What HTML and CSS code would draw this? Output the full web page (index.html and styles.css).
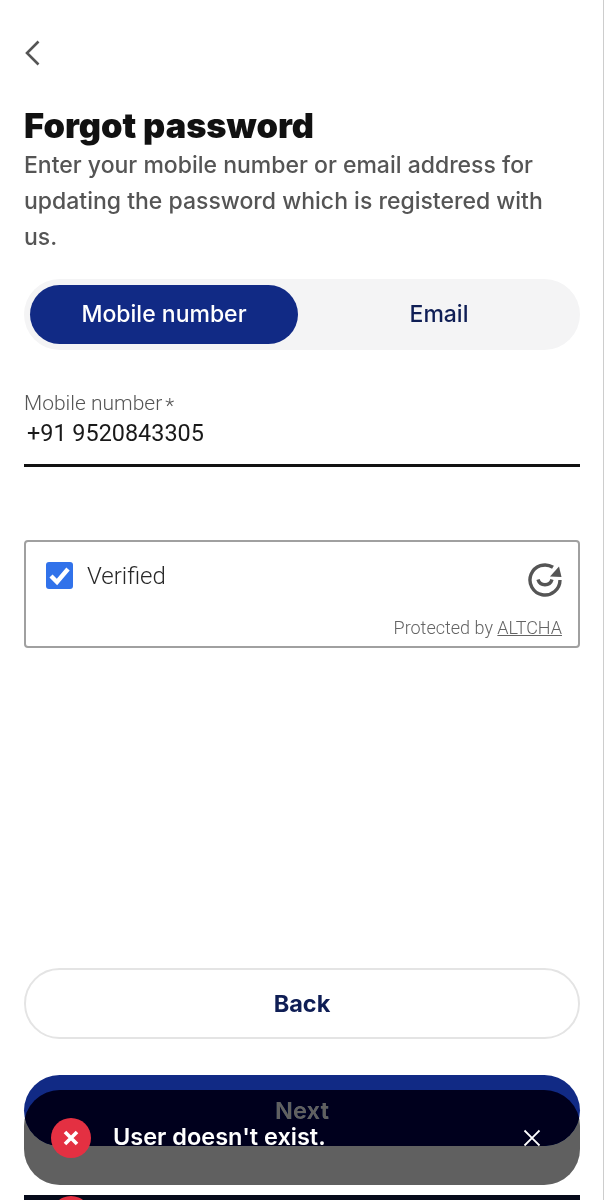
FILE: index.html
```html
<!DOCTYPE html>
<html>
    <head>
        <title>Forgot password</title>
        <link rel="stylesheet" href="styles.css">
    </head>
    <body>
        <div class="page">
            <button class="back-icon">
                <svg width="18" height="26" viewBox="0 0 18 26"><path d="M14.500 1.500 3 13 14.500 24.500" fill="none" stroke="#555" stroke-width="2.600"/></svg>
            </button>
            <h1 class="title">Forgot password</h1>
            <p class="intro">Enter your mobile number or email address for updating the password which is registered with us.</p>
            <div class="tabs">
                <div class="tab active">Mobile number</div>
                <div class="tab">Email</div>
            </div>
            <div class="field">
                <div class="field-label">Mobile number<span class="star">*</span></div>
                <div class="field-value">+91 9520843305</div>
            </div>
            <div class="altcha">
                <div class="altcha-row">
                    <div class="check">
                        <svg width="27" height="27" viewBox="0 0 27 27"><path d="M5 14l6 6L22 7" fill="none" stroke="#fff" stroke-width="4.400"/></svg>
                    </div>
                    <span class="verified">Verified</span>
                    <svg class="altcha-logo" width="34" height="34" viewBox="0 0 34 34">
                        <path d="M25 4.300A15 15 0 1 0 32 17" fill="none" stroke="#555" stroke-width="3.400"/>
                        <path d="M22 13.500 33.500 14 31 3.500z" fill="#555"/>
                        <path d="M10 16.500a7.300 7.300 0 0 0 14 0" fill="none" stroke="#555" stroke-width="3.400"/>
                    </svg>
                </div>
                <div class="altcha-foot">Protected by <a href="#">ALTCHA</a></div>
            </div>
            <div class="actions">
                <button class="btn btn-back">Back</button>
                <button class="btn btn-next">Next</button>
            </div>
        </div>
        <div class="toast">
            <span class="toast-icon">
                <svg width="18" height="18" viewBox="0 0 18 18"><path d="M3 3l12 12M15 3 3 15" stroke="#fff" stroke-width="3.600"/></svg>
            </span>
            <span class="toast-text">User doesn't exist.</span>
            <svg class="toast-close" width="18" height="18" viewBox="0 0 18 18"><path d="M1.500 1.500l15 15M16.500 1.500l-15 15" stroke="#fff" stroke-width="1.800"/></svg>
        </div>
        <div class="toast-next">
            <span class="toast-icon"></span>
        </div>
    </body>
</html>
```
FILE: styles.css
```css
*{
    box-sizing: border-box;
}
html,body{
    margin: 0;
    height: 1200px;
    overflow: hidden;
    background-color: white;
}
body{
    position: relative;
    font-family: Inter, "Liberation Sans", sans-serif;
    box-shadow: inset -1px 0 0 rgb(205,205,205);
}
.page{
    height: 1200px;
    padding: 40px 24px 54px;
    display: flex;
    flex-direction: column;
}
.back-icon{
    width: 18px;
    height: 26px;
    padding: 0;
    border: none;
    background: none;
    display: flex;
}
.title{
    margin: 40px 0 0;
    font-size: 34.400px;
    line-height: 40px;
    font-weight: 900;
    color: rgb(17,17,17);
}
.intro{
    margin: 1px 0 0;
    font-size: 23px;
    line-height: 36px;
    font-weight: 450;
    color: rgb(85,85,85);
}
.tabs{
    margin-top: 24px;
    height: 71px;
    padding: 6px;
    gap: 6px;
    border-radius: 36px;
    background-color: rgb(244,244,245);
    display: flex;
}
.tab{
    flex: 1;
    display: flex;
    justify-content: center;
    align-items: center;
    padding-bottom: 2px;
    border-radius: 30px;
    font-size: 23px;
    font-weight: 500;
    color: rgb(15,30,85);
}
.tab.active{
    flex: none;
    width: 268px;
    background-color: rgb(17,42,133);
    color: white;
}
.field{
    margin-top: 41px;
    height: 76px;
    border-bottom: 3px solid rgb(17,17,17);
    font-family: Roboto, sans-serif;
}
.field-label{
    font-size: 21px;
    line-height: 25px;
    font-weight: 300;
    color: rgb(85,85,85);
}
.star{
    margin-left: 3px;
    vertical-align: -3px;
}
.field-value{
    padding-left: 3px;
    font-size: 23.400px;
    line-height: 28px;
    color: rgb(25,25,25);
}
.altcha{
    margin-top: 73px;
    height: 108px;
    padding: 20px 16px 7px 20px;
    border: 2px solid rgb(160,160,160);
    border-radius: 4px;
    font-family: Roboto, sans-serif;
    display: flex;
    flex-direction: column;
    justify-content: space-between;
}
.altcha-row{
    display: flex;
    align-items: flex-start;
}
.check{
    width: 27px;
    height: 27px;
    border-radius: 3px;
    background-color: rgb(49,114,234);
    display: flex;
}
.verified{
    margin-left: 14px;
    font-size: 24px;
    line-height: 28px;
    font-weight: 300;
    color: rgb(40,40,40);
}
.altcha-logo{
    margin-left: auto;
    margin-top: 1px;
}
.altcha-foot{
    text-align: right;
    font-size: 18px;
    line-height: 22px;
    font-weight: 300;
    color: rgb(100,100,100);
}
.altcha-foot a{
    color: rgb(100,100,100);
}
.actions{
    margin-top: auto;
    display: flex;
    flex-direction: column;
    gap: 36px;
}
.btn{
    height: 71px;
    border-radius: 36px;
    font-family: Inter, sans-serif;
    font-size: 23.500px;
    font-weight: 700;
}
.btn-back{
    background-color: white;
    border: 2px solid rgb(228,228,228);
    color: rgb(15,30,85);
}
.btn-next{
    background-color: rgb(17,42,133);
    border: none;
    color: white;
}
.toast{
    position: absolute;
    left: 24px;
    top: 1090px;
    width: 556px;
    height: 95px;
    padding: 0 39px 0 27px;
    border-radius: 36px;
    background-color: rgba(0,0,0,0.25);
    backdrop-filter: brightness(0.5) contrast(1.45);
    display: flex;
    align-items: center;
}
.toast-icon{
    width: 40px;
    height: 40px;
    border-radius: 50%;
    background-color: rgb(228,48,66);
    display: flex;
    justify-content: center;
    align-items: center;
}
.toast-text{
    margin: 0 0 2px 22px;
    font-size: 23.500px;
    font-weight: 600;
    color: white;
}
.toast-close{
    margin-left: auto;
}
.toast-next{
    position: absolute;
    left: 24px;
    top: 1195px;
    width: 556px;
    height: 5px;
    overflow: hidden;
    padding: 1px 27px;
    background-color: rgb(6,10,26);
}
```
